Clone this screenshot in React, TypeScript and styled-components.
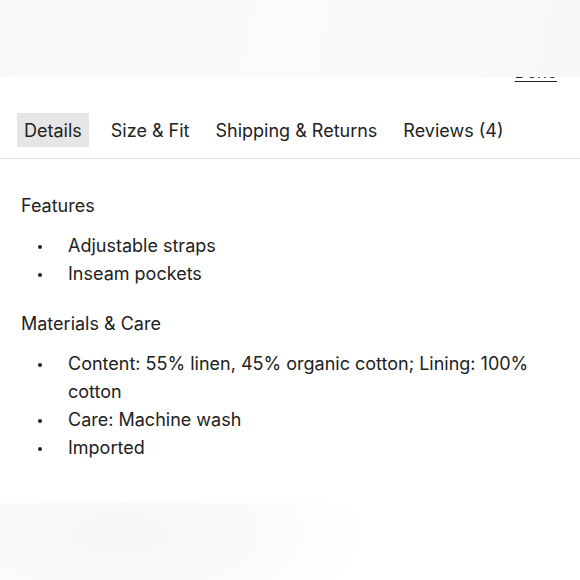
import styled, { createGlobalStyle } from "styled-components";

const GlobalStyle = createGlobalStyle`
  html, body {
    margin: 0;
    padding: 0;
    background: #ffffff;
  }
  body {
    font-family: Inter, "Liberation Sans", sans-serif;
    color: #222222;
  }
`;

const tabs = ["Details", "Size & Fit", "Shipping & Returns", "Reviews (4)"];

const features = ["Adjustable straps", "Inseam pockets"];

const materials = [
  "Content: 55% linen, 45% organic cotton; Lining: 100% cotton",
  "Care: Machine wash",
  "Imported",
];

const App = () => {
  return (
    <Page>
      <GlobalStyle />
      <Sheet>
        <TopBar>
          <DoneLink href="#">Done</DoneLink>
        </TopBar>

        <TabList>
          {tabs.map((tab, i) => (
            <Tab key={tab} $active={i === 0}>
              {tab}
            </Tab>
          ))}
        </TabList>

        <Body>
          <SectionTitle>Features</SectionTitle>
          <BulletList>
            {features.map((item) => (
              <li key={item}>{item}</li>
            ))}
          </BulletList>

          <SectionTitle>Materials &amp; Care</SectionTitle>
          <BulletList>
            {materials.map((item) => (
              <li key={item}>{item}</li>
            ))}
          </BulletList>
        </Body>
      </Sheet>

      <TopShade />
      <BottomShade />
    </Page>
  );
};

const Page = styled.div`
  position: relative;
  width: 580px;
  height: 580px;
  overflow: hidden;
  background: #ffffff;
`;

const Sheet = styled.div`
  display: flex;
  flex-direction: column;
  padding-top: 62px;
`;

const TopBar = styled.div`
  display: flex;
  justify-content: flex-end;
  padding: 0 23px 0 0;
  height: 30px;
`;

const DoneLink = styled.a`
  font-size: 17px;
  color: #222222;
  text-decoration: underline;
  text-underline-offset: 3px;
  text-decoration-thickness: 1px;
`;

const TabList = styled.div`
  display: flex;
  align-items: center;
  gap: 14px;
  padding: 21px 17px 11px;
  border-bottom: 1px solid #e3e3e3;
`;

const Tab = styled.div<{ $active?: boolean }>`
  padding: 0 ${(p) => (p.$active ? "7px" : "6px")};
  margin-right: ${(p) => (p.$active ? "2px" : "0")};
  height: 34px;
  display: flex;
  align-items: center;
  font-size: 18px;
  color: #222222;
  background: ${(p) => (p.$active ? "#e6e6e6" : "transparent")};
  white-space: nowrap;
`;

const Body = styled.div`
  padding: 33px 21px 0;
`;

const SectionTitle = styled.div`
  font-size: 18px;
  line-height: 28px;
  margin-bottom: 12px;
`;

const BulletList = styled.ul`
  margin: 0 0 22px;
  padding: 0 30px 0 47px;
  list-style: none;

  li {
    position: relative;
    font-size: 18px;
    line-height: 28px;
  }

  li::before {
    content: "";
    position: absolute;
    left: -30px;
    top: 13px;
    width: 4px;
    height: 4px;
    border-radius: 50%;
    background: #222222;
  }
`;

const TopShade = styled.div`
  position: absolute;
  top: 0;
  left: 0;
  right: 0;
  height: 77px;
  background: linear-gradient(100deg, #f8f8f8 0%, #fbfbfb 50%, #f7f7f7 100%);
`;

const BottomShade = styled.div`
  position: absolute;
  top: 503px;
  left: 0;
  right: 0;
  bottom: 0;
  background: radial-gradient(
    ellipse 260px 110px at 120px 30px,
    #f6f6f6 0%,
    #fcfcfc 70%,
    #ffffff 100%
  );
`;

export default App;
